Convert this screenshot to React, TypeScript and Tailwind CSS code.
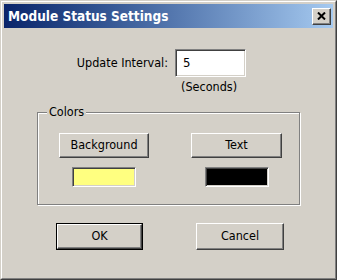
const raised =
  'border border-t-white border-l-white border-b-[#404040] border-r-[#404040] shadow-[inset_-1px_-1px_0_#808080]';
const sunken =
  'border border-t-[#808080] border-l-[#808080] border-b-white border-r-white shadow-[inset_1px_1px_0_#404040,inset_-1px_-1px_0_#d4d0c8]';

function Button({ label, width, isDefault }: { label: string; width: string; isDefault?: boolean }) {
  if (isDefault) {
    return (
      <div className={`${width} h-[27px] border border-black`}>
        <div className={`w-full h-full bg-[#d4d0c8] ${raised} flex items-center justify-center text-black`}>
          {label}
        </div>
      </div>
    );
  }
  return (
    <div className={`${width} h-[27px] bg-[#d4d0c8] ${raised} flex items-center justify-center text-black`}>
      {label}
    </div>
  );
}

export default function App() {
  return (
    <div
      className="w-[337px] h-[280px] bg-[#d4d0c8] text-[12.5px] text-black select-none"
      style={{ fontFamily: '"DejaVu Sans Condensed", "DejaVu Sans", Tahoma, sans-serif' }}
    >
      <div className="w-full h-full border border-t-[#d4d0c8] border-l-[#d4d0c8] border-b-[#404040] border-r-[#404040]">
        <div className="w-full h-full border border-t-white border-l-white border-b-[#808080] border-r-[#808080] p-[2px] flex flex-col">
          {/* title bar */}
          <div className="h-[24px] flex items-center justify-between bg-gradient-to-r from-[#0a246a] to-[#a6caf0] pl-[4px] pr-[2px]">
            <span className="text-white font-bold text-[13.5px]">Module Status Settings</span>
            <div className={`w-[19px] h-[17px] bg-[#d4d0c8] ${raised} flex items-center justify-center`}>
              <svg width="9" height="8" viewBox="0 0 9 8">
                <path d="M1 0.5 L8 7.5 M8 0.5 L1 7.5" stroke="#000" strokeWidth="2" />
              </svg>
            </div>
          </div>

          {/* interval */}
          <div className="flex items-center mt-[21px]">
            <div className="w-[164px] text-right">Update Interval:</div>
            <div className={`ml-[7px] w-[71px] h-[28px] bg-white ${sunken} flex items-center pl-[7px] text-[13px]`}>5</div>
          </div>
          <div className="pl-[177px] mt-[3px] leading-[14px]">(Seconds)</div>

          {/* colors group */}
          <div className="ml-[33px] mt-[18px] w-[263px] h-[93px] relative border border-[#808080] shadow-[1px_1px_0_#fff,inset_1px_1px_0_#fff]">
            <span className="absolute left-[9px] -top-[8px] px-[2px] bg-[#d4d0c8] leading-[14px]">Colors</span>
            <div className="flex pl-[21px] pt-[20px] gap-[42px]">
              <div className="flex flex-col items-center w-[90px]">
                <div className={`w-[90px] h-[25px] bg-[#d4d0c8] ${raised} flex items-center justify-center`}>Background</div>
                <div className={`mt-[9px] w-[64px] h-[20px] bg-[#ffff80] ${sunken}`} />
              </div>
              <div className="flex flex-col items-center w-[91px]">
                <div className={`w-[91px] h-[25px] bg-[#d4d0c8] ${raised} flex items-center justify-center`}>Text</div>
                <div className={`mt-[9px] w-[64px] h-[20px] bg-black ${sunken}`} />
              </div>
            </div>
          </div>

          {/* ok / cancel */}
          <div className="flex mt-[18px] pl-[52px] gap-[53px]">
            <Button label="OK" width="w-[87px]" isDefault />
            <Button label="Cancel" width="w-[88px]" />
          </div>
        </div>
      </div>
    </div>
  );
}
